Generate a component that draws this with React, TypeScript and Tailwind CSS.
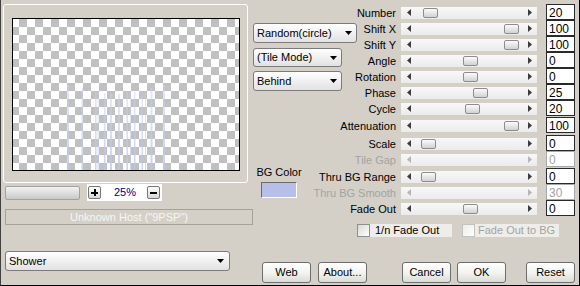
import React from "react";

const streaks: { x: number; y: number; w: number }[] = [
  { x: 67, y: 85, w: 2 },
  { x: 81.5, y: 88, w: 1.5 },
  { x: 95, y: 92, w: 1.5 },
  { x: 97.5, y: 92, w: 1 },
  { x: 104, y: 93, w: 1.5 },
  { x: 110, y: 94, w: 2 },
  { x: 118, y: 94, w: 2 },
  { x: 126.5, y: 92, w: 1.5 },
  { x: 130, y: 92, w: 1 },
  { x: 134, y: 92, w: 1.5 },
  { x: 141.5, y: 92, w: 1.5 },
  { x: 145, y: 92, w: 1 },
  { x: 150.5, y: 88, w: 2 },
  { x: 163, y: 85, w: 2 },
];

function DownTri() {
  return (
    <svg width="7" height="4" viewBox="0 0 7 4" className="shrink-0">
      <polygon points="0,0 7,0 3.5,4" fill="#000" />
    </svg>
  );
}

function Combo({ label, className }: { label: string; className: string }) {
  return (
    <div
      className={
        "flex items-center justify-between border border-[#7b7b7b] rounded-[3px] bg-linear-to-b from-white to-[#e2e2e2] pl-[3px] pr-[4px] " +
        className
      }
    >
      <span className="whitespace-nowrap">{label}</span>
      <DownTri />
    </div>
  );
}

function Button({ label, className }: { label: string; className: string }) {
  return (
    <div
      className={
        "shrink-0 w-[49px] h-[21px] flex items-center justify-center border border-[#6e6e6e] rounded-[3px] bg-linear-to-b from-white via-[#f3f3f0] to-[#dcdcd6] " +
        className
      }
    >
      {label}
    </div>
  );
}

function Arrow({ dir, disabled }: { dir: "l" | "r"; disabled?: boolean }) {
  const c = disabled ? "#b5b5b5" : "#3c3c3c";
  return (
    <svg width="4" height="7" viewBox="0 0 4 7" className="shrink-0">
      {dir === "l" ? (
        <polygon points="4,0 4,7 0,3.5" fill={c} />
      ) : (
        <polygon points="0,0 0,7 4,3.5" fill={c} />
      )}
    </svg>
  );
}

type Row = { label: string; value: string; thumb?: number; disabled?: boolean; gap?: boolean };

function SliderRow({ row }: { row: Row }) {
  const dis = !!row.disabled;
  return (
    <div className={"flex items-center h-[16px] " + (row.gap ? "mt-px" : "")}>
      <div className={"flex-1 min-w-0 flex justify-end pt-[3px] " + (dis ? "text-[#a3a3a3]" : "text-black")}>
        <span className="shrink-0 whitespace-nowrap">{row.label}</span>
      </div>
      <div className="relative shrink-0 ml-[5px] mt-px w-[136px] h-[12px] bg-linear-to-b from-[#f8f8f8] to-[#ebebeb] flex items-center justify-between pl-[6px] pr-[5px]">
        <Arrow dir="l" disabled={dis} />
        <Arrow dir="r" disabled={dis} />
        {row.thumb !== undefined && (
          <div
            className="absolute top-px w-[15px] h-[10px] rounded-[2px] border border-[#8c8c8c] bg-linear-to-b from-[#fbfbfb] to-[#d2d2d2]"
            style={{ left: row.thumb }}
          />
        )}
      </div>
      <div
        className={
          "shrink-0 ml-[9px] w-[29px] h-[16px] bg-white border pl-[2px] pt-px flex items-center text-[12px] " +
          (dis ? "border-[#a8a8a8] text-[#a3a3a3]" : "border-[#2a2a2a] text-black")
        }
      >
        {row.value}
      </div>
      <div className="shrink-0 w-[4px]" />
    </div>
  );
}

const rowsA: Row[] = [
  { label: "Number", value: "20", thumb: 22 },
  { label: "Shift X", value: "100", thumb: 103 },
  { label: "Shift Y", value: "100", thumb: 103 },
  { label: "Angle", value: "0", thumb: 62 },
  { label: "Rotation", value: "0", thumb: 62 },
  { label: "Phase", value: "25", thumb: 72 },
  { label: "Cycle", value: "20", thumb: 64 },
  { label: "Attenuation", value: "100", thumb: 103, gap: true },
];

const rowsB: Row[] = [
  { label: "Scale", value: "0", thumb: 20 },
  { label: "Tile Gap", value: "0", disabled: true },
  { label: "Thru BG Range", value: "0", thumb: 20, gap: true },
  { label: "Thru BG Smooth", value: "30", disabled: true },
  { label: "Fade Out", value: "0", thumb: 62 },
];

function SmallBtn({ sign }: { sign: "+" | "-" }) {
  return (
    <div className="w-[13px] h-[13px] rounded-[2px] border border-[#777] bg-linear-to-b from-white to-[#d6d6d6] flex items-center justify-center">
      <div className="relative w-[7px] h-[7px]">
        <div className="absolute left-0 top-[3px] w-[7px] h-[1.5px] bg-black" />
        {sign === "+" && <div className="absolute top-0 left-[3px] w-[1.5px] h-[7px] bg-black" />}
      </div>
    </div>
  );
}

export default function App() {
  return (
    <div className="w-[580px] h-[286px] bg-[#d4d0c8] border-l border-l-[#404040] border-r border-r-black border-b border-b-black flex text-[11px] leading-none text-black font-['Liberation_Sans',Arial,sans-serif] overflow-hidden">
      {/* Left column */}
      <div className="w-[252px] shrink-0 flex flex-col">
        <div className="ml-[2px] mt-[4px] w-[245px] h-[179px] border border-white rounded-[3px] pl-[8px] pt-[13px]">
          <div className="relative w-[228px] h-[153px] border border-black bg-[conic-gradient(#c0c0c0_25%,#ffffff_0_50%,#c0c0c0_0_75%,#ffffff_0)] bg-[length:16px_16px] bg-[position:-2px_0px]">
            <svg className="absolute inset-0" width="226" height="151" viewBox="0 0 226 151">
              <defs>
                <linearGradient id="st" x1="0" y1="0" x2="0" y2="1">
                  <stop offset="0" stopColor="#c9cff0" stopOpacity="0.5" />
                  <stop offset="1" stopColor="#bec6ec" stopOpacity="0.8" />
                </linearGradient>
              </defs>
              {streaks.map((s, i) => (
                <rect key={i} x={s.x - 13} y={s.y - 19} width={s.w} height={151 - (s.y - 19)} fill="url(#st)" />
              ))}
            </svg>
          </div>
        </div>
        <div className="mt-px h-[17px] flex items-start">
          <div className="ml-[4px] mt-[2px] w-[75px] h-[14px] rounded-[2px] border border-[#a2a2a2] bg-linear-to-b from-[#f2f2f2] via-[#dedede] to-[#c9c9c9]" />
          <div className="ml-[7px] w-[75px] h-[17px] bg-white flex items-center justify-between pl-px pr-[2px]">
            <SmallBtn sign="+" />
            <span className="text-[#000080] ml-[2px]">25%</span>
            <SmallBtn sign="-" />
          </div>
        </div>
        <div className="ml-[4px] mt-[8px] w-[248px] h-[16px] border border-[#a5a29a] flex items-center justify-center text-[#f6f6f4] whitespace-nowrap">
          Unknown Host ("9PSP")
        </div>
        <Combo label="Shower" className="ml-[4px] mt-[26px] w-[225px] h-[20px] pr-[5px]" />
      </div>

      {/* Right section */}
      <div className="flex-1 min-w-0 flex flex-col">
        <div className="mt-[4px] flex">
          <div className="w-[104px] shrink-0 flex flex-col">
            <Combo label="Random(circle)" className="mt-[19px] w-[104px] h-[20px]" />
            <Combo label="(Tile Mode)" className="mt-[5px] w-[89px] h-[19px]" />
            <Combo label="Behind" className="mt-[4px] w-[89px] h-[20px]" />
          </div>
          <div className="flex-1 min-w-0 flex flex-col">
            {rowsA.map((r) => (
              <SliderRow key={r.label} row={r} />
            ))}
          </div>
        </div>
        <div className="mt-[2px] flex">
          <div className="w-[52px] shrink-0 flex flex-col items-center">
            <div className="mt-[31px] h-[13px] leading-[13px] whitespace-nowrap">BG Color</div>
            <div className="mt-[3px] w-[36px] h-[16px] bg-[#b7bfe9] border border-t-[#6a6a6a] border-l-[#6a6a6a] border-r-white border-b-white" />
          </div>
          <div className="flex-1 min-w-0 flex flex-col">
            {rowsB.map((r) => (
              <SliderRow key={r.label} row={r} />
            ))}
          </div>
        </div>
        <div className="mt-[8px] h-[13px] flex items-center">
          <div className="shrink-0 ml-[104px] w-[13px] h-[13px] border border-[#8e8f8f] bg-linear-to-br from-[#d8d8d3] to-white" />
          <div className="shrink-0 w-[82px] h-[13px] bg-[#eeede9] flex items-center pl-[5px] whitespace-nowrap">1/n Fade Out</div>
          <div className="shrink-0 ml-[10px] w-[13px] h-[13px] border border-[#c2c2c2] bg-linear-to-br from-[#ecece8] to-white" />
          <div className="shrink-0 w-[84px] h-[13px] bg-[#eeede9] flex items-center pl-[3px] whitespace-nowrap text-[#a3a3a3]">Fade Out to BG</div>
        </div>
        <div className="mt-[25px] flex">
          <Button label="Web" className="ml-[9px]" />
          <Button label="About..." className="ml-[7px]" />
          <Button label="Cancel" className="ml-[35px]" />
          <Button label="OK" className="ml-[6px]" />
          <Button label="Reset" className="ml-[20px]" />
        </div>
      </div>
    </div>
  );
}
